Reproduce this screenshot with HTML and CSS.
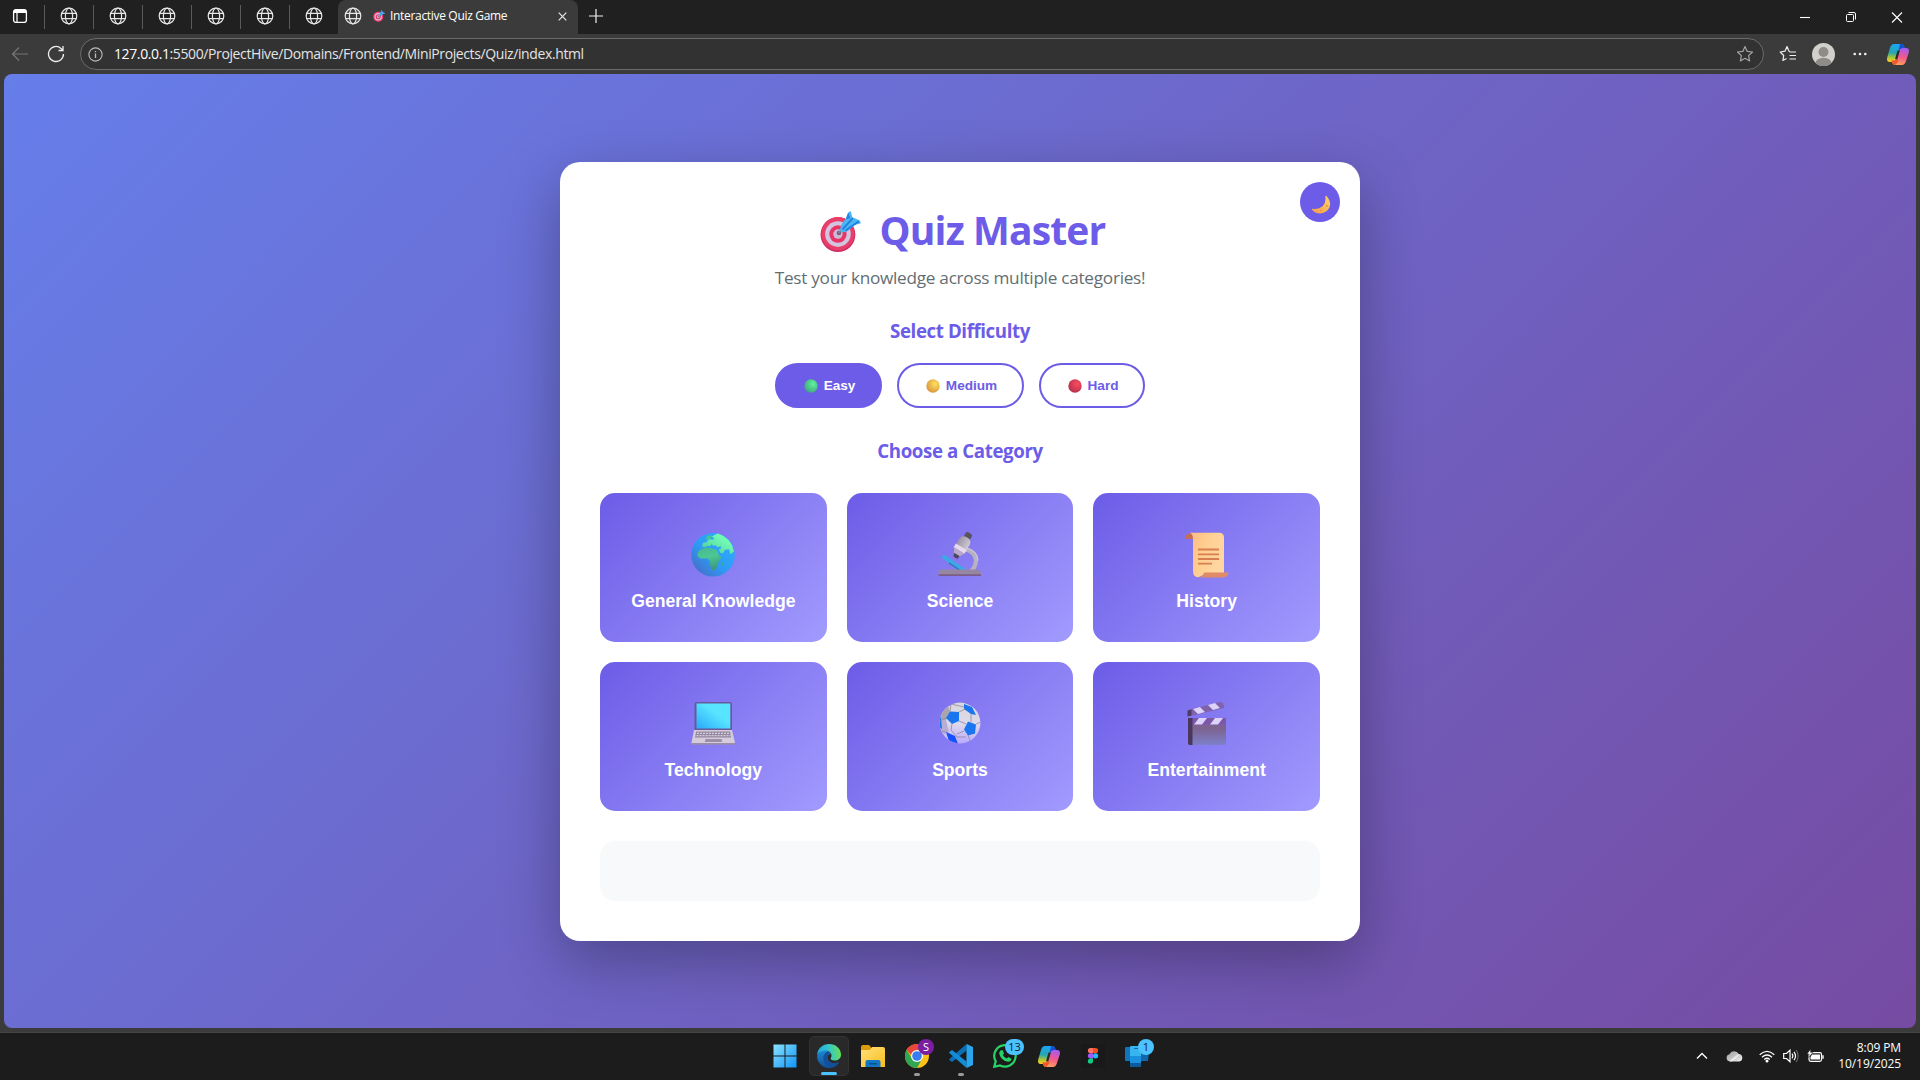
FILE: index.html
```html
<!DOCTYPE html>
<html lang="en">
<head>
<meta charset="utf-8">
<title>Interactive Quiz Game</title>
<link rel="stylesheet" href="styles.css">
</head>
<body>
<svg class="defs" aria-hidden="true">
  <defs>
    <linearGradient id="gGlobe" x1="1" y1="0" x2="0" y2="1"><stop offset="0" stop-color="#2fb0ff"/><stop offset=".55" stop-color="#2d9bf5"/><stop offset="1" stop-color="#4c62bd"/></linearGradient>
    <linearGradient id="gLand" x1="1" y1="0" x2="0" y2="1"><stop offset=".3" stop-color="#72fbb4"/><stop offset="1" stop-color="#4fc497"/></linearGradient>
    <linearGradient id="gAfrica" x1="0" y1="0" x2=".3" y2="1"><stop offset="0" stop-color="#46b78d"/><stop offset=".5" stop-color="#4cc795"/><stop offset="1" stop-color="#3d9a80"/></linearGradient>
    <linearGradient id="gScreen" x1="1" y1="0" x2="0" y2="1"><stop offset=".4" stop-color="#58e4ff"/><stop offset="1" stop-color="#2aa9fb"/></linearGradient>
    <linearGradient id="gPaper" x1="0" y1="0" x2="1" y2=".4"><stop offset="0" stop-color="#ffb983"/><stop offset=".5" stop-color="#ffcf90"/><stop offset="1" stop-color="#ffd6a2"/></linearGradient>
    <linearGradient id="gSlate" x1="0" y1="0" x2="0" y2="1"><stop offset="0" stop-color="#7d6490"/><stop offset=".4" stop-color="#7d6490"/><stop offset="1" stop-color="#7d80cb"/></linearGradient>
    <linearGradient id="gBall" x1="0" y1="0" x2="0" y2="1"><stop offset="0" stop-color="#d8d8d8"/><stop offset=".5" stop-color="#ded8ec"/><stop offset="1" stop-color="#b4a2ff"/></linearGradient>
    <linearGradient id="gTube" x1="0" y1="0" x2="1" y2="0"><stop offset="0" stop-color="#9d94a5"/><stop offset="1" stop-color="#cfcbd2"/></linearGradient>
    <linearGradient id="gMoon" x1="1" y1="0" x2="0" y2="1"><stop offset="0" stop-color="#ffd567"/><stop offset="1" stop-color="#f79a4b"/></linearGradient>
    <radialGradient id="gGreen" cx=".65" cy=".35" r=".7"><stop offset="0" stop-color="#62f29c"/><stop offset="1" stop-color="#3fa87d"/></radialGradient>
    <radialGradient id="gYellow" cx=".65" cy=".35" r=".7"><stop offset="0" stop-color="#ffe05a"/><stop offset="1" stop-color="#d8963f"/></radialGradient>
    <radialGradient id="gRed" cx=".65" cy=".35" r=".7"><stop offset="0" stop-color="#fb4b60"/><stop offset="1" stop-color="#b8304c"/></radialGradient>
    <linearGradient id="gCop1" x1=".4" y1="0" x2=".3" y2="1"><stop offset="0" stop-color="#19a5f5"/><stop offset=".5" stop-color="#27a7b0"/><stop offset=".75" stop-color="#a4c53a"/><stop offset="1" stop-color="#ffcf1f"/></linearGradient>
    <linearGradient id="gCop2" x1=".6" y1="0" x2=".4" y2="1"><stop offset="0" stop-color="#a45cf0"/><stop offset=".5" stop-color="#f0588f"/><stop offset="1" stop-color="#ffa05b"/></linearGradient>
    <linearGradient id="gWin" x1="0" y1="0" x2="1" y2="1"><stop offset="0" stop-color="#8be2ff"/><stop offset="1" stop-color="#1094f6"/></linearGradient>
    <linearGradient id="gEdge1" x1="0" y1=".4" x2="1" y2=".3"><stop offset="0" stop-color="#1fa7e6"/><stop offset=".5" stop-color="#35c6c9"/><stop offset="1" stop-color="#67e24e"/></linearGradient>
    <linearGradient id="gEdge2" x1="0" y1="0" x2="0" y2="1"><stop offset="0" stop-color="#1c8fdb"/><stop offset="1" stop-color="#134c94"/></linearGradient>
    <linearGradient id="gFold" x1="0" y1="0" x2="1" y2="1"><stop offset="0" stop-color="#ffe07a"/><stop offset="1" stop-color="#f8bd1e"/></linearGradient>
    <linearGradient id="gCloud" x1="0" y1="0" x2="1" y2="1"><stop offset="0" stop-color="#9a9a9a"/><stop offset="1" stop-color="#f0f0f0"/></linearGradient>
    <symbol id="web" viewBox="0 0 18 18"><g fill="none" stroke="#e6e6e6" stroke-width="1.2"><circle cx="9" cy="9" r="7.8"/><ellipse cx="9" cy="9" rx="3.6" ry="7.8"/><path d="M1.8 6.3h14.4M1.8 11.7h14.4"/></g></symbol>
    <symbol id="target" viewBox="0 0 40 40"><circle cx="17.5" cy="23" r="17" fill="#cf2e66"/><circle cx="17.5" cy="22" r="16.2" fill="#e93e6a"/><circle cx="17.5" cy="22.5" r="12.5" fill="#d3c4e0"/><circle cx="17.5" cy="22.5" r="8.5" fill="#ea3465"/><circle cx="17.5" cy="22.5" r="4.6" fill="#cbb9d8"/><circle cx="18.5" cy="21.5" r="2.2" fill="#776080"/><path d="M18 21.500l8-8" stroke="#8b7e9c" stroke-width="1.600"/><path d="M19.500 18.500q1-7 6-11l2-6 2.500-1.500 1.500 6 7 3 1.500 3-7 2q-5 7-12 7z" fill="#4ab6f2"/><path d="M22 18l10-11M25 19l13-9" stroke="#1f7fe0" stroke-width="1.700"/><path d="M25 8l2.500-6.500 2 5.500z" fill="#2186df"/></symbol>
    <symbol id="copilot" viewBox="0 0 24 24"><path d="M8 2h7q2.500 0 3.300 3l.7 2.500h-3.500q-2 0-2.800 2.500l-2 7q-.9 3-3.700 3H4Q.2 20 1.200 15.500L4 6q1.200-4 4-4z" fill="url(#gCop1)"/><path d="M14 2h1.500q2.300 0 3 3l.8 2.500H15q-2 0-2.500 1.500z" fill="#174ed2"/><path d="M16 22H9q-2.300 0-3.100-3l-.4-1.500h3.200q2 0 2.700-2.500l2-7q.8-3 3.600-3h3.100q3.700 0 2.700 4.500L20 18q-1.200 4-4 4z" transform="translate(0 1)" fill="url(#gCop2)"/><path d="M9.500 23q-2.600 0-3.500-3l-.5-1.600h3q2 0 2.900-2.600l1 3z" fill="#f1592b"/><path d="M11.500 8.500h2.300l-2.600 8.800H9z" fill="#2a2a2a"/></symbol>
  </defs>
</svg>

<header class="tabs">
  <div class="tab-mini first"><svg width="16" height="16" viewBox="0 0 16 16"><rect x="1.600" y="1.600" width="12.800" height="12.800" rx="2.500" fill="none" stroke="#fff" stroke-width="1.300"/><path d="M1.600 5V3.500q0-2 2-2h8.800q2 0 2 2V5z" fill="#fff"/><path d="M5 5v9" stroke="#fff" stroke-width="1.200"/></svg></div>
  <div class="tab-mini"><svg class="web"><use href="#web"/></svg></div>
  <div class="tab-mini"><svg class="web"><use href="#web"/></svg></div>
  <div class="tab-mini"><svg class="web"><use href="#web"/></svg></div>
  <div class="tab-mini"><svg class="web"><use href="#web"/></svg></div>
  <div class="tab-mini"><svg class="web"><use href="#web"/></svg></div>
  <div class="tab-mini last"><svg class="web"><use href="#web"/></svg></div>
  <div class="tab-active">
    <svg class="web"><use href="#web"/></svg>
    <svg class="tab-emoji"><use href="#target"/></svg>
    <span class="tab-title">Interactive Quiz Game</span>
    <svg class="tab-close" width="9" height="9" viewBox="0 0 9 9"><path d="M.7.7l7.600 7.600M8.300.7L.7 8.300" stroke="#e8e8e8" stroke-width="1.200"/></svg>
  </div>
  <svg class="tab-new" width="14" height="14" viewBox="0 0 14 14"><path d="M7 0v14M0 7h14" stroke="#f2f2f2" stroke-width="1.200"/></svg>
  <div class="window-controls">
    <svg viewBox="0 0 12 12"><path d="M1 6.500h10" stroke="#fff" stroke-width="1.100"/></svg>
    <svg viewBox="0 0 12 12"><g fill="none" stroke="#fff"><rect x="1.500" y="3.500" width="7" height="7" rx="1"/><path d="M3.500 1.500h5.500q1.500 0 1.500 1.500v5.500"/></g></svg>
    <svg viewBox="0 0 12 12"><path d="M1 1.500l10 10M11 1.500l-10 10" stroke="#fff" stroke-width="1.100"/></svg>
  </div>
</header>

<nav class="toolbar">
  <svg class="back" width="18" height="16" viewBox="0 0 18 16"><path d="M17 8H1.500M8 1.500L1.500 8 8 14.500" fill="none" stroke="#777" stroke-width="1.200"/></svg>
  <svg class="reload" width="18" height="18" viewBox="0 0 18 18"><path d="M16.500 9A7.500 7.500 0 1 1 14 3.400L16 5.200M16 1v4.500h-4.500" fill="none" stroke="#eee" stroke-width="1.300"/></svg>
  <div class="address">
    <svg class="info" width="15" height="15" viewBox="0 0 15 15"><circle cx="7.500" cy="7.500" r="6.600" fill="none" stroke="#bbb" stroke-width="1.100"/><path d="M7.500 6.600v4.300M7.500 4v1.300" stroke="#bbb" stroke-width="1.300"/></svg>
    <span class="url"><b>127.0.0.1</b>:5500/ProjectHive/Domains/Frontend/MiniProjects/Quiz/index.html</span>
    <svg class="star" width="18" height="18" viewBox="0 0 18 18"><path d="M9 1.500l2.200 4.900 5.300.6-3.900 3.600 1 5.300L9 13.300l-4.600 2.600 1-5.300L1.500 7l5.300-.6z" fill="none" stroke="#a5a5a5" stroke-width="1.200" stroke-linejoin="round"/></svg>
  </div>
  <svg class="favs" width="18" height="18" viewBox="0 0 18 18"><path d="M11 6.500L10 6.200 8 1.600 6 6.200 1.200 7l3.500 3.500-.8 5L7.500 13.500M10.500 7H17M10.500 10.500H17M10.500 14H17" fill="none" stroke="#eee" stroke-width="1.200" stroke-linejoin="round"/></svg>
  <svg class="avatar" width="23" height="23" viewBox="0 0 23 23"><clipPath id="av"><circle cx="11.500" cy="11.500" r="11.500"/></clipPath><g clip-path="url(#av)"><path d="M0 0h23v23H0z" fill="#d2d0cc"/><circle cx="11.500" cy="9" r="5" fill="#8f8b86"/><ellipse cx="11.500" cy="20" rx="8" ry="5.200" fill="#8f8b86"/></g></svg>
  <svg class="more" width="14" height="4" viewBox="0 0 14 4"><g fill="#f2f2f2"><circle cx="1.700" cy="2" r="1.300"/><circle cx="7" cy="2" r="1.300"/><circle cx="12.300" cy="2" r="1.300"/></g></svg>
  <svg class="cop" width="24" height="24"><use href="#copilot"/></svg>
</nav>

<main class="page">
  <section class="quiz">
    <button class="theme"><svg class="moon" viewBox="0 0 20 21" preserveAspectRatio="none"><path d="M15.600 1Q20.800 7.500 18.500 13.500 16 19.500 9.500 20.500 3.500 20.500.6 15.800q0-.8 1-.7 6 1.200 10-2.600 3.700-4 2.700-10.500Q14.600.6 15.600 1z" fill="url(#gMoon)"/><circle cx="16" cy="12" r="1.300" fill="#e8a44c"/><circle cx="10" cy="17" r="1" fill="#e8924c"/></svg></button>
    <h1 class="title"><svg class="title-emoji"><use href="#target"/></svg><span>Quiz Master</span></h1>
    <p class="subtitle">Test your knowledge across multiple categories!</p>
    <h3 class="heading difficulty">Select Difficulty</h3>
    <div class="levels">
      <button class="level easy"><svg class="dot" viewBox="0 0 14 14"><circle cx="7" cy="7" r="6.700" fill="url(#gGreen)"/></svg>Easy</button>
      <button class="level medium"><svg class="dot" viewBox="0 0 14 14"><circle cx="7" cy="7" r="6.700" fill="url(#gYellow)"/></svg>Medium</button>
      <button class="level hard"><svg class="dot" viewBox="0 0 14 14"><circle cx="7" cy="7" r="6.700" fill="url(#gRed)"/></svg>Hard</button>
    </div>
    <h3 class="heading category">Choose a Category</h3>
    <div class="grid">
      <button class="card"><svg class="emoji" viewBox="0 0 46 46"><circle cx="23" cy="22.800" r="21.800" fill="url(#gGlobe)"/><path d="M28 1.600Q41.500 6 44 19.500l-3.500 2.800-1.500-5-4 .5-2 3.500-3-.5-1-3.500 2.500-1-1-2-3 1-2-2-2 .5-2-1.500-1.500 2-3-.500-2 1.500-3-1 1-3.500 3.500-.5 2.500-3.300 4 .8 1.500-1.500-3-1.500 3.500-2z" fill="url(#gLand)"/><path d="M16.500 4.500l5-1.500 1 1.500-3 3-3 .5z" fill="#42c795"/><path d="M11.500 17l5.500-1.500 7 1.500 3 1 2.500 6.500h2.500l-3.500 5.500-1.500 4.500-2 3.500-3 .3-1.800-4.300v-4.500l-2.500-3H11q-4-1-3.500-5 1-3 4-4.500z" fill="url(#gAfrica)"/><path d="M31.500 31l1.500-1.300v2.500l-1.500 1.500z" fill="#3ba98a"/></svg><span>General Knowledge</span></button>
      <button class="card"><svg class="emoji" viewBox="0 0 46 46"><path d="M28 17q10 3 11 11 0 8-7 13" fill="none" stroke="#b9b2c0" stroke-width="4.200"/><path d="M28.500 15.500q12 3 12.500 13" fill="none" stroke="#d2ccd8" stroke-width="1.200"/><path d="M7 25l19 13" stroke="#3aa9e6" stroke-width="4" stroke-linecap="round"/><path d="M12 31l12 8" stroke="#2a78b4" stroke-width="1.500"/><g transform="rotate(31 25 14)"><rect x="21.500" y="-1" width="7" height="8" rx="2" fill="#5a535e"/><rect x="19" y="4" width="12" height="18" rx="5" fill="url(#gTube)"/><rect x="18.500" y="15" width="12.500" height="4.500" fill="#e6d9f4"/><path d="M19 19h12l-2.500 5h-7z" fill="#b8a9c8"/><path d="M22 24h6v3.500h-5z" fill="#4f4658"/></g><path d="M3 37.500h38q3 0 3 6.500H1.500Q1.500 37.500 3 37.500z" fill="#9587a2"/><path d="M1.500 42.300h42.500v1.600H1.500z" fill="#7c5d88"/></svg><span>Science</span></button>
      <button class="card"><svg class="emoji" viewBox="0 0 46 46"><path d="M1 7q0-5 6-6l3 6z" fill="#c66f50"/><path d="M6 .7h29q5 0 5 5v37H20l-6 2.500q-5-.5-5-6V7Q9 2 6 .7z" fill="url(#gPaper)"/><path d="M20 40.500h24.500q0 4-5 5H14q5-.5 6-5z" fill="#e08a67"/><path d="M14 17.500h21M14 22.300h21M14 27h21M14 31.600h14" stroke="#d77f51" stroke-width="1.800"/></svg><span>History</span></button>
      <button class="card"><svg class="emoji" viewBox="0 0 46 46"><rect x="4.500" y="1" width="37.500" height="29" rx="2" fill="#665a9b"/><path d="M6.500 2.600h33.800v25H6.500z" fill="url(#gScreen)"/><path d="M4 29h38l3 12.500q0 1.500-2 1.500H3q-2 0-1.500-1.500z" fill="#d4cbdb"/><path d="M1.500 42h43.500v1.800H1.500z" fill="#9b8dab"/><path d="M6.200 30.500h33.800l1.200 6H5z" fill="#94889f"/><path d="M7 32.300h32.500M6.500 34.700H40.500" stroke="#d5cedc" stroke-width="1.200" stroke-dasharray="2 1"/><path d="M15.500 38h16l.8 3H14.800z" fill="#9b90a7"/></svg><span>Technology</span></button>
      <button class="card"><svg class="emoji" viewBox="0 0 46 46"><clipPath id="bc"><circle cx="23" cy="22" r="20.400"/></clipPath><g clip-path="url(#bc)"><path d="M0 0h46v46H0z" fill="url(#gBall)"/><path d="M2 10l9-5 3 8-6 7-5-2z" fill="#aaa5ad"/><path d="M3 18l6 1 3 12-7 3z" fill="#b8aed3"/><g fill="#1976ef"><path d="M13 10.500l9 .5v9l-7 3-6-6z"/><path d="M31 20.500l8 3-1 9-7 2-4-6z"/><path d="M27 3l8 3 4 8-5-1-7-5z"/><path d="M9 31l9 4 3 8-9-3z" fill="#1550ff"/><path d="M0 18l4-2 1 12-4-2z"/></g><g fill="none" stroke="#8f88a0" stroke-width=".8"><path d="M13 10.500L14 3M14 3l13 3M22 11l6-3M34 13l0 8M22 20l7 3M15 23l-1 6 6 7M27 30l-7 3M31 34l3 8M20 36l9 0M9 17l-6 3M39 23l5-2M9 31l-5-1"/></g></g></svg><span>Sports</span></button>
      <button class="card"><svg class="emoji" viewBox="0 0 46 46"><path d="M4 9L36 1q4 0 4 6L7 15q-4 0-3-6z" fill="#8062ac"/><path d="M9 8l7-2 5 5-7 2zM24 4l7-2 5 5-7 2z" fill="#dcd2fa"/><path d="M3.500 9.500l4-1v6l-4 1z" fill="#4c3d60"/><path d="M4 17h38v25.500q0 1.500-2 1.500H6q-2 0-2-2z" fill="url(#gSlate)"/><path d="M4 17h38v7H4z" fill="#7d58a8"/><path d="M15 17h8l-5 6.500h-8zM31 17h8l-5 6.500h-8z" fill="#dcd2fa"/><path d="M4 17h4.500v27H6q-2 0-2-2z" fill="#49385c"/></svg><span>Entertainment</span></button>
    </div>
    <div class="stats"></div>
  </section>
</main>

<footer class="taskbar">
  <div class="apps">
    <div class="app"><svg viewBox="0 0 24 24"><path d="M.5.500h11v11H.500zM12.500.500h11v11h-11zM.5 12.500h11v11H.500zM12.500 12.500h11v11h-11z" fill="url(#gWin)"/></svg></div>
    <div class="app current"><svg viewBox="0 0 24 24"><path d="M0 12a12 12 0 0 0 21.600 7.200q.6-1-.6-.7-4 1.600-7.600-.3-4-2.200-2.600-6.200 1-2.500 3-2.500L8 5Q2 6 0 12z" fill="url(#gEdge2)"/><path d="M0 11.500C.5 4 6 0 12 0c7 0 12 5 12 10.500 0 4-3 6-6.500 6-3 0-4-1.200-4-1.900 0-.6 1-1.200 1-3.100C14.500 9 12 6.500 8.500 6.500 4 6.500 1 9 0 11.500z" fill="url(#gEdge1)"/><path d="M9.500 8Q4.500 12 7.500 18.500 10 23.500 15 23.600q4-.8 6.600-4.400.6-1-.6-.7-4 1.600-7.600-.3-4-2.200-2.900-6.200.8-2.500 2.500-3.200-2-1.300-3.500-.8z" fill="#12509b"/></svg></div>
    <div class="app"><svg viewBox="0 0 24 24"><path d="M0 3q0-2 2-2h6l2.500 3v4H0z" fill="#dc9a0c"/><path d="M0 6h9l2-3h11q2 0 2 2v18H0z" fill="url(#gFold)"/><path d="M4.500 23v-5q0-2 2-2h11q2 0 2 2v5z" fill="#1078c4"/><path d="M8 19h8v1.500H8z" fill="#0a4f91"/></svg></div>
    <div class="app run"><svg viewBox="0 0 24 24"><circle cx="12" cy="12" r="12" fill="#fbc117"/><path d="M1.600 6A12 12 0 0 1 22.400 6H12L9 14z" fill="#e8453c"/><path d="M1.600 6A12 12 0 0 0 12 24l5-9-10-.500z" fill="#2fa650"/><circle cx="12" cy="12" r="6" fill="#fff"/><circle cx="12" cy="12" r="4.800" fill="#377df0"/></svg><span class="badge user">S</span></div>
    <div class="app run"><svg viewBox="0 0 24 24"><path d="M17.500 0v6.500L3 18 .3 16V15z" fill="#0b6fb8"/><path d="M.3 8L3 6l14.500 11.500V24L.3 9z" fill="#128cd8"/><path d="M17.500 0L24 3v18l-6.500 3z" fill="#2aa6ef"/></svg></div>
    <div class="app"><svg viewBox="0 0 24 24"><path d="M1.200 22.800l1.500-5.500A10.700 10.700 0 1 1 7 21.400z" fill="none" stroke="#25d366" stroke-width="2.200"/><path d="M7.500 6.500l2-.5 1.500 3.500-1.200 1.500q1.400 2.500 4 3.600l1.500-1.500 3.200 1.700q-.3 3-3.300 3-7-1-9-8 0-2 1.300-3.300z" fill="#25d366"/></svg><span class="badge wide">13</span></div>
    <div class="app"><svg viewBox="0 0 24 24"><use href="#copilot"/></svg></div>
    <div class="app"><svg viewBox="0 0 24 24"><path d="M0 0h24v24H0z" fill="#1a1919"/><path d="M12 4H9.500a2.600 2.600 0 0 0 0 5.200H12z" fill="#ff7262"/><path d="M12 4h2.500a2.600 2.600 0 0 1 0 5.200H12z" fill="#f24e1e"/><path d="M12 9.200H9.500a2.600 2.600 0 0 0 0 5.200H12z" fill="#a259ff"/><circle cx="14.600" cy="11.800" r="2.600" fill="#1abcfe"/><path d="M12 14.400H9.500A2.600 2.600 0 1 0 12 17z" fill="#0acf83"/></svg></div>
    <div class="app"><svg viewBox="0 0 24 24"><path d="M1 3h9v14H1q-1 0-1-1V4q0-1 1-1z" fill="#1473bd"/><path d="M13 8h11l-1 9H13z" fill="#1268ad"/><path d="M5 17h11v6H5z" fill="#0e5a9c"/><rect x="5" y="2" width="11" height="17" rx="1" fill="#37b5f1"/><path d="M5 12h11v7H5z" fill="#1a91dc"/><path d="M9 4.500h4" stroke="#176ba9"/></svg><span class="badge">1</span></div>
  </div>
  <div class="tray">
    <svg class="chev" width="12" height="8" viewBox="0 0 12 8"><path d="M1 6.500l5-5 5 5" fill="none" stroke="#fff" stroke-width="1.400"/></svg>
    <svg class="cloud" width="17" height="12" viewBox="0 0 17 12"><path d="M4 11.500a3.700 3.700 0 0 1-.5-7.300A5.200 5.200 0 0 1 12.800 4a3.800 3.800 0 0 1 .5 7.500z" fill="url(#gCloud)"/><path d="M3 11.200L12 4.200l2 .5-8 6.800z" fill="#fff" opacity=".6"/></svg>
    <svg class="wifi" width="16" height="13" viewBox="0 0 16 13"><g fill="none" stroke="#fff" stroke-width="1.200"><path d="M.7 4.800q7.300-7 14.600 0M3 7.300q5-4.600 10 0M5.200 9.500q2.800-2.500 5.600 0"/></g><circle cx="8" cy="11" r="1.500" fill="#fff"/></svg>
    <svg class="sound" width="16" height="14" viewBox="0 0 16 14"><g fill="none" stroke="#fff" stroke-width="1.200"><path d="M.7 4.500h2.800L7 1.200v11.600L3.500 9.500H.7zM9 4.700q1.600 2.300 0 4.600M11 2.800q3 4.200 0 8.400"/><path d="M13.200 1q3.800 6 0 12" stroke="#666"/></g></svg>
    <svg class="battery" width="17" height="14" viewBox="0 0 17 14"><rect x="2" y="3.700" width="12.500" height="8.600" rx="1.800" fill="none" stroke="#fff" stroke-width="1.200"/><path d="M5 5.500h8v5H3.500V8zM15.300 6.300h1.400v3.400h-1.400z" fill="#fff"/><path d="M3.700 0L0 5h2.200L1.500 8.500 6 3.500H3.500z" fill="#fff" stroke="#1c1c1c" stroke-width=".5"/></svg>
    <div class="clock"><div>8:09 PM</div><div>10/19/2025</div></div>
  </div>
</footer>
</body>
</html>
```
FILE: styles.css
```css
* { box-sizing: border-box; }
body {
  margin: 0;
  width: 1920px;
  height: 1080px;
  overflow: hidden;
  display: flex;
  flex-direction: column;
  background: #3b3b3b;
  font-family: "Open Sans", "Noto Sans", sans-serif;
}
svg { display: block; flex: none; }
button { font-family: "Liberation Sans", Arial, sans-serif; border: 0; padding: 0; }
.defs { position: absolute; width: 0; height: 0; }

/* tab strip */
.tabs { height: 34px; flex: none; display: flex; align-items: center; background: #202020; }
.tab-mini { width: 49px; height: 24px; display: flex; align-items: center; justify-content: center; border-right: 1px solid #5a5a5a; padding-bottom: 2px; }
.tab-mini.first { width: 45px; padding-right: 4px; }
.tab-mini.last { width: 44px; padding-left: 4px; margin-right: 0; border-right: 0; }
.web { width: 18px; height: 18px; }
.tab-active { width: 240px; height: 34px; margin-left: 4px; padding: 0 11px 2px 6px; display: flex; align-items: center; background: #3b3b3b; border-radius: 8px 8px 0 0; }
.tab-emoji { width: 12px; height: 12px; margin-left: 11px; }
.tab-title { margin-left: 5px; font-size: 12px; line-height: 16px; letter-spacing: -0.32px; color: #fff; white-space: nowrap; }
.tab-close { margin-left: auto; }
.tab-new { margin: 0 0 2px 11px; }
.window-controls { margin-left: auto; display: flex; gap: 34px; padding: 0 17px 0 0; }
.window-controls svg { width: 12px; height: 12px; }

/* toolbar */
.toolbar { height: 40px; flex: none; display: flex; align-items: center; padding: 0 10px 0 11px; }
.reload { margin-left: 18px; }
.address { width: 1684px; height: 32px; margin-left: 15px; padding: 0 9px; display: flex; align-items: center; border: 1px solid #6b6b6b; border-radius: 16px; background: #323232; }
.info { margin-left: -2px; }
.url { margin-left: 11px; font-size: 14px; line-height: 20px; letter-spacing: -0.39px; color: #e4e4e4; white-space: nowrap; }
.url b { font-weight: 400; color: #fff; }
.star { margin-left: auto; }
.favs { margin-left: 15px; }
.avatar { margin-left: 15px; }
.more { margin-left: 18px; }
.cop { margin-left: 19px; }

/* page */
.page {
  height: 954px;
  flex: none;
  margin: 0 4px;
  display: flex;
  justify-content: center;
  align-items: center;
  overflow: hidden;
  border-radius: 8px;
  background: linear-gradient(135deg, #667eea 0%, #764ba2 100%);
}
.quiz {
  position: relative;
  width: 800px;
  height: 779px;
  margin-top: 1px;
  padding: 40px;
  border-radius: 20px;
  background: #fff;
  box-shadow: 0 20px 60px rgba(0, 0, 0, .3);
  text-align: center;
}
.theme { position: absolute; top: 20px; right: 20px; width: 40px; height: 40px; border-radius: 50%; display: flex; align-items: center; justify-content: center; background: #6c5ce7; }
.moon { width: 20px; height: 19px; margin: 4px 0 0 2px; }
.title { height: 57px; margin: 0; padding-left: 5px; display: flex; justify-content: center; align-items: center; gap: 19px; color: #6c5ce7; font-size: 39px; line-height: 55px; font-weight: 700; letter-spacing: -0.85px; white-space: nowrap; }
.title span { padding-bottom: 2px; }
.title-emoji { width: 41px; height: 41px; margin-top: 1px; }
.subtitle { height: 26px; margin: 6px 0 0; color: #636e72; font-size: 17.2px; line-height: 26px; letter-spacing: -0.27px; white-space: nowrap; }
.heading { margin: 0; height: 26px; color: #6c5ce7; font-size: 18.7px; line-height: 26px; font-weight: 700; letter-spacing: -0.4px; }
.difficulty { margin-top: 27px; }
.levels { display: flex; justify-content: center; gap: 15px; margin-top: 19px; }
.level { height: 45px; padding-left: 2px; display: flex; align-items: center; justify-content: center; gap: 6px; border: 2px solid #6c5ce7; border-radius: 25px; background: #fff; color: #6c5ce7; font-size: 13.6px; font-weight: 700; }
.easy { width: 107px; background: #6c5ce7; color: #fff; }
.medium { width: 127px; }
.hard { width: 106px; }
.dot { width: 14px; height: 14px; }
.category { margin-top: 30px; }
.grid { display: grid; grid-template-columns: repeat(3, 1fr); gap: 20px; margin-top: 29px; }
.card { height: 149px; display: flex; flex-direction: column; align-items: center; padding-top: 39px; border-radius: 15px; background: linear-gradient(135deg, #6c5ce7, #a29bfe); color: #fff; font-size: 17.6px; line-height: 20px; font-weight: 700; }
.emoji { width: 46px; height: 46px; margin-bottom: 13px; }
.stats { height: 60px; margin-top: 30px; border-radius: 15px; background: #f8f9fa; }

/* taskbar */
.taskbar { position: relative; height: 48px; flex: none; margin-top: 4px; border-top: 1px solid #444; background: #1c1c1c; display: flex; justify-content: center; }
.apps { display: flex; gap: 4px; padding: 3px 0 0 2px; }
.app { position: relative; width: 40px; height: 40px; display: flex; align-items: center; justify-content: center; border-radius: 5px; }
.app > svg { width: 24px; height: 24px; }
.current { background: #292929; border: 1px solid #333; }
.current::after, .run::after { content: ""; position: absolute; bottom: 0; left: 50%; width: 16px; height: 3px; margin-left: -8px; border-radius: 2px; background: #4cc2ff; }
.run::after { width: 6px; margin-left: -3px; background: #9a9a9a; }
.badge { position: absolute; top: 3px; right: 3px; min-width: 16px; height: 16px; padding: 0 3px; border-radius: 8px; background: #4cc2ff; color: #10212b; font-size: 11px; line-height: 16px; text-align: center; }
.wide { right: 1px; min-width: 19px; }
.user { background: #7b1fa2; color: #fff; }
.tray { position: absolute; right: 0; top: 0; height: 46px; padding-right: 19px; display: flex; align-items: center; }
.cloud { margin-left: 18px; }
.wifi { margin-left: 16px; }
.sound { margin-left: 8px; }
.battery { margin-left: 8px; }
.clock { width: 79px; margin-left: -2px; color: #fff; font-size: 12px; line-height: 16px; letter-spacing: -0.1px; text-align: right; }
```
